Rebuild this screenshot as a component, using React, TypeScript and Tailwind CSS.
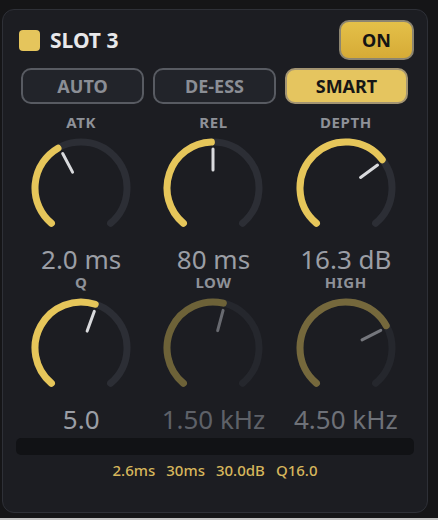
import React from 'react';

type KnobProps = {
  label: string;
  value: string;
  angle: number;
  dim?: 'none' | 'low' | 'high';
};

const START = -140;
const END = 140;
const R = 46;

const pt = (a: number, r: number) => {
  const rad = (a * Math.PI) / 180;
  return [50 + r * Math.sin(rad), 50 - r * Math.cos(rad)];
};

const arc = (a0: number, a1: number) => {
  const [x0, y0] = pt(a0, R);
  const [x1, y1] = pt(a1, R);
  const large = a1 - a0 > 180 ? 1 : 0;
  return `M ${x0} ${y0} A ${R} ${R} 0 ${large} 1 ${x1} ${y1}`;
};

const Knob: React.FC<KnobProps> = ({ label, value, angle, dim = 'none' }) => {
  const fill = dim === 'none' ? '#e6c65a' : dim === 'low' ? '#6d6238' : '#75683c';
  const track = dim === 'none' ? '#2c2e35' : '#25272d';
  const needle = dim === 'none' ? '#d9dadd' : dim === 'low' ? '#686a70' : '#75777d';
  const valueColor =
    dim === 'none' ? 'text-[#9b9ea5]' : dim === 'low' ? 'text-[#5e6168]' : 'text-[#6e7178]';
  const [nx0, ny0] = pt(angle, 18);
  const [nx1, ny1] = pt(angle, 39);

  return (
    <div className="flex flex-col items-center">
      <div className="h-[16px] text-[15px] font-bold leading-[16px] tracking-[0.04em] text-[#8e9198]">
        {label}
      </div>
      <svg width="100" height="100" viewBox="0 0 100 100" className="mt-[8px]">
        <path d={arc(START, END)} fill="none" stroke={track} strokeWidth="7" strokeLinecap="round" />
        <path d={arc(START, angle - 2)} fill="none" stroke={fill} strokeWidth="7" strokeLinecap="round" />
        <line x1={nx0} y1={ny0} x2={nx1} y2={ny1} stroke={needle} strokeWidth="3" strokeLinecap="round" />
      </svg>
      <div className={`mt-[8px] h-[26px] text-[26px] leading-[26px] ${valueColor}`}>{value}</div>
    </div>
  );
};

const modes = [
  { name: 'AUTO', active: false },
  { name: 'DE-ESS', active: false },
  { name: 'SMART', active: true },
];

export default function App() {
  return (
    <div
      className="flex h-[520px] w-[438px] flex-col bg-[#151517]"
      style={{ fontFamily: '"Noto Sans", "Open Sans", sans-serif' }}
    >
      <div className="h-[518px] pl-[2px] pt-[9px]">
        <div className="h-[504px] w-[426px] rounded-[12px] border border-[#2e3037] bg-[#1c1d22]">
          {/* header */}
          <div className="mt-[10px] flex h-[40px] items-center justify-between pl-[16px] pr-[13px]">
            <div className="flex items-center gap-[10px]">
              <div className="h-[21px] w-[21px] rounded-[4px] bg-[#e5c55c]" />
              <span className="text-[21px] font-bold leading-none text-[#e8e8ea]">SLOT 3</span>
            </div>
            <button className="h-[40px] w-[75px] rounded-[10px] border-2 border-[#8c8570] bg-gradient-to-b from-[#e4c049] to-[#d6ab36] text-[18px] font-bold text-[#141414]">
              ON
            </button>
          </div>

          {/* modes */}
          <div className="mt-[8px] flex gap-[9px] pl-[18px]">
            {modes.map((m) => (
              <button
                key={m.name}
                className={
                  m.active
                    ? 'h-[36px] w-[123px] rounded-[10px] border-2 border-[#a39472] bg-[#e5c55f] text-[18px] font-bold text-[#161616]'
                    : 'h-[36px] w-[123px] rounded-[10px] border-2 border-[#585b62] bg-[#22242a] text-[18px] font-bold text-[#8b8e95]'
                }
              >
                {m.name}
              </button>
            ))}
          </div>

          {/* knobs */}
          <div className="ml-[12px] mt-[10px] grid w-[397px] grid-cols-3 gap-y-[2px]">
            <Knob label="ATK" value="2.0 ms" angle={-28} />
            <Knob label="REL" value="80 ms" angle={0} />
            <Knob label="DEPTH" value="16.3 dB" angle={54} />
            <Knob label="Q" value="5.0" angle={20} />
            <Knob label="LOW" value="1.50 kHz" angle={15} dim="low" />
            <Knob label="HIGH" value="4.50 kHz" angle={63} dim="high" />
          </div>

          {/* meter bar */}
          <div className="ml-[13px] mt-[6px] h-[17px] w-[398px] rounded-[5px] bg-[#111215]" />

          <div className="mt-[5px] flex h-[20px] items-center justify-center gap-[11px] text-[15px] font-medium leading-[20px] text-[#d6b65c]">
            <span>2.6ms</span>
            <span>30ms</span>
            <span>30.0dB</span>
            <span>Q16.0</span>
          </div>
        </div>
      </div>
      <div className="h-[2px] bg-[#c4c4c4]" />
    </div>
  );
}
